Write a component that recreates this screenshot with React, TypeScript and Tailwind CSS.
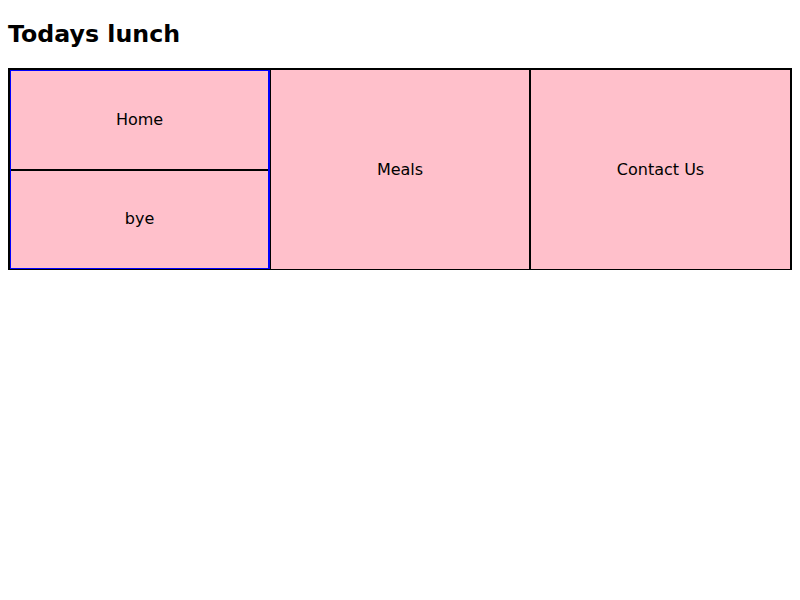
export default function App() {
  return (
    <div className="px-2 font-['DejaVu_Sans',sans-serif] text-black">
      <h2 className="mt-5 mb-5 text-[23.7px] font-bold leading-7">Todays lunch</h2>
      <div className="flex h-[202px] border-x-2 border-t-2 border-b border-black bg-[#ffc0cb]">
        <div className="flex w-[261px] border-r border-black">
          <div className="flex flex-1 flex-col border-y border-l border-r-2 border-[#0000ff]">
            <div className="flex flex-1 items-center justify-center border-b-2 border-black">Home</div>
            <div className="flex flex-1 items-center justify-center">bye</div>
          </div>
        </div>
        <div className="flex w-[259px] items-center justify-center border-r border-black">Meals</div>
        <div className="flex w-[260px] items-center justify-center border-l border-black">Contact Us</div>
      </div>
    </div>
  );
}
